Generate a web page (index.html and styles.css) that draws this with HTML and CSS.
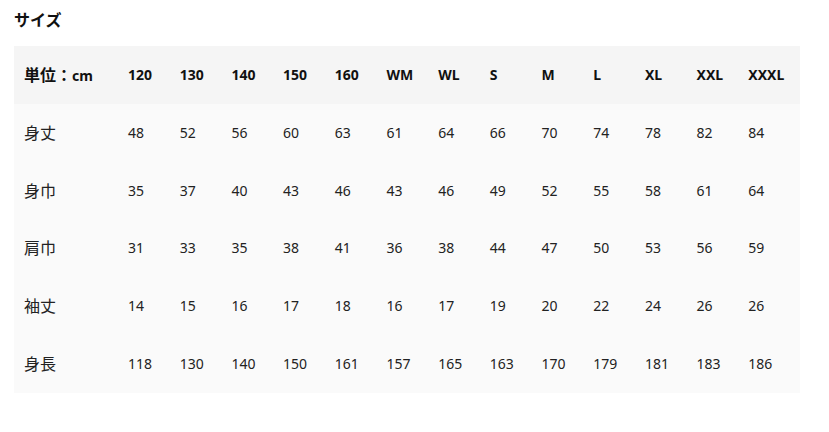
FILE: index.html
```html
<!DOCTYPE html>
<html lang="ja">
<head>
<meta charset="utf-8">
<link rel="stylesheet" href="styles.css">
</head>
<body>
<h2 class="title">サイズ</h2>
<table class="size-table">
  <colgroup>
    <col class="c-label">
    <col class="c-data"><col class="c-data"><col class="c-data"><col class="c-data"><col class="c-data"><col class="c-data">
    <col class="c-data"><col class="c-data"><col class="c-data"><col class="c-data"><col class="c-data"><col class="c-data">
    <col class="c-last">
  </colgroup>
  <thead>
    <tr><th class="label">単位：<span class="unit">cm</span></th><th>120</th><th>130</th><th>140</th><th>150</th><th>160</th><th>WM</th><th>WL</th><th>S</th><th>M</th><th>L</th><th>XL</th><th>XXL</th><th>XXXL</th></tr>
  </thead>
  <tbody>
    <tr><td class="label">身丈</td><td>48</td><td>52</td><td>56</td><td>60</td><td>63</td><td>61</td><td>64</td><td>66</td><td>70</td><td>74</td><td>78</td><td>82</td><td>84</td></tr>
    <tr><td class="label">身巾</td><td>35</td><td>37</td><td>40</td><td>43</td><td>46</td><td>43</td><td>46</td><td>49</td><td>52</td><td>55</td><td>58</td><td>61</td><td>64</td></tr>
    <tr><td class="label">肩巾</td><td>31</td><td>33</td><td>35</td><td>38</td><td>41</td><td>36</td><td>38</td><td>44</td><td>47</td><td>50</td><td>53</td><td>56</td><td>59</td></tr>
    <tr><td class="label">袖丈</td><td>14</td><td>15</td><td>16</td><td>17</td><td>18</td><td>16</td><td>17</td><td>19</td><td>20</td><td>22</td><td>24</td><td>26</td><td>26</td></tr>
    <tr><td class="label">身長</td><td>118</td><td>130</td><td>140</td><td>150</td><td>161</td><td>157</td><td>165</td><td>163</td><td>170</td><td>179</td><td>181</td><td>183</td><td>186</td></tr>
  </tbody>
</table>
</body>
</html>
```
FILE: styles.css
```css
html, body {
  margin: 0;
  padding: 0;
  background: #ffffff;
}
body {
  padding: 10px 14px;
  font-family: "Noto Sans", "Noto Sans CJK JP", sans-serif;
  color: #222222;
}
.title {
  margin: 0 0 16px;
  font-size: 16px;
  line-height: 20px;
  font-weight: 700;
  color: #111111;
}
.size-table {
  border-collapse: collapse;
  table-layout: fixed;
  width: 786px;
}
.c-label { width: 104px; }
.c-data { width: 51.7px; }
.c-last { width: 61.6px; }
.size-table th,
.size-table td {
  padding: 0 0 0 10px;
  height: 58px;
  text-align: left;
  vertical-align: middle;
  font-size: 14px;
  line-height: 20px;
  white-space: nowrap;
}
.size-table thead tr {
  background: #f5f5f5;
}
.size-table th {
  font-weight: 700;
  color: #111111;
}
.size-table tbody tr {
  background: #fafafa;
  height: 57.8px;
}
.size-table tbody td {
  height: 57.8px;
}
.size-table .label {
  font-size: 16px;
}
.size-table .unit {
  font-size: 14px;
}
```
